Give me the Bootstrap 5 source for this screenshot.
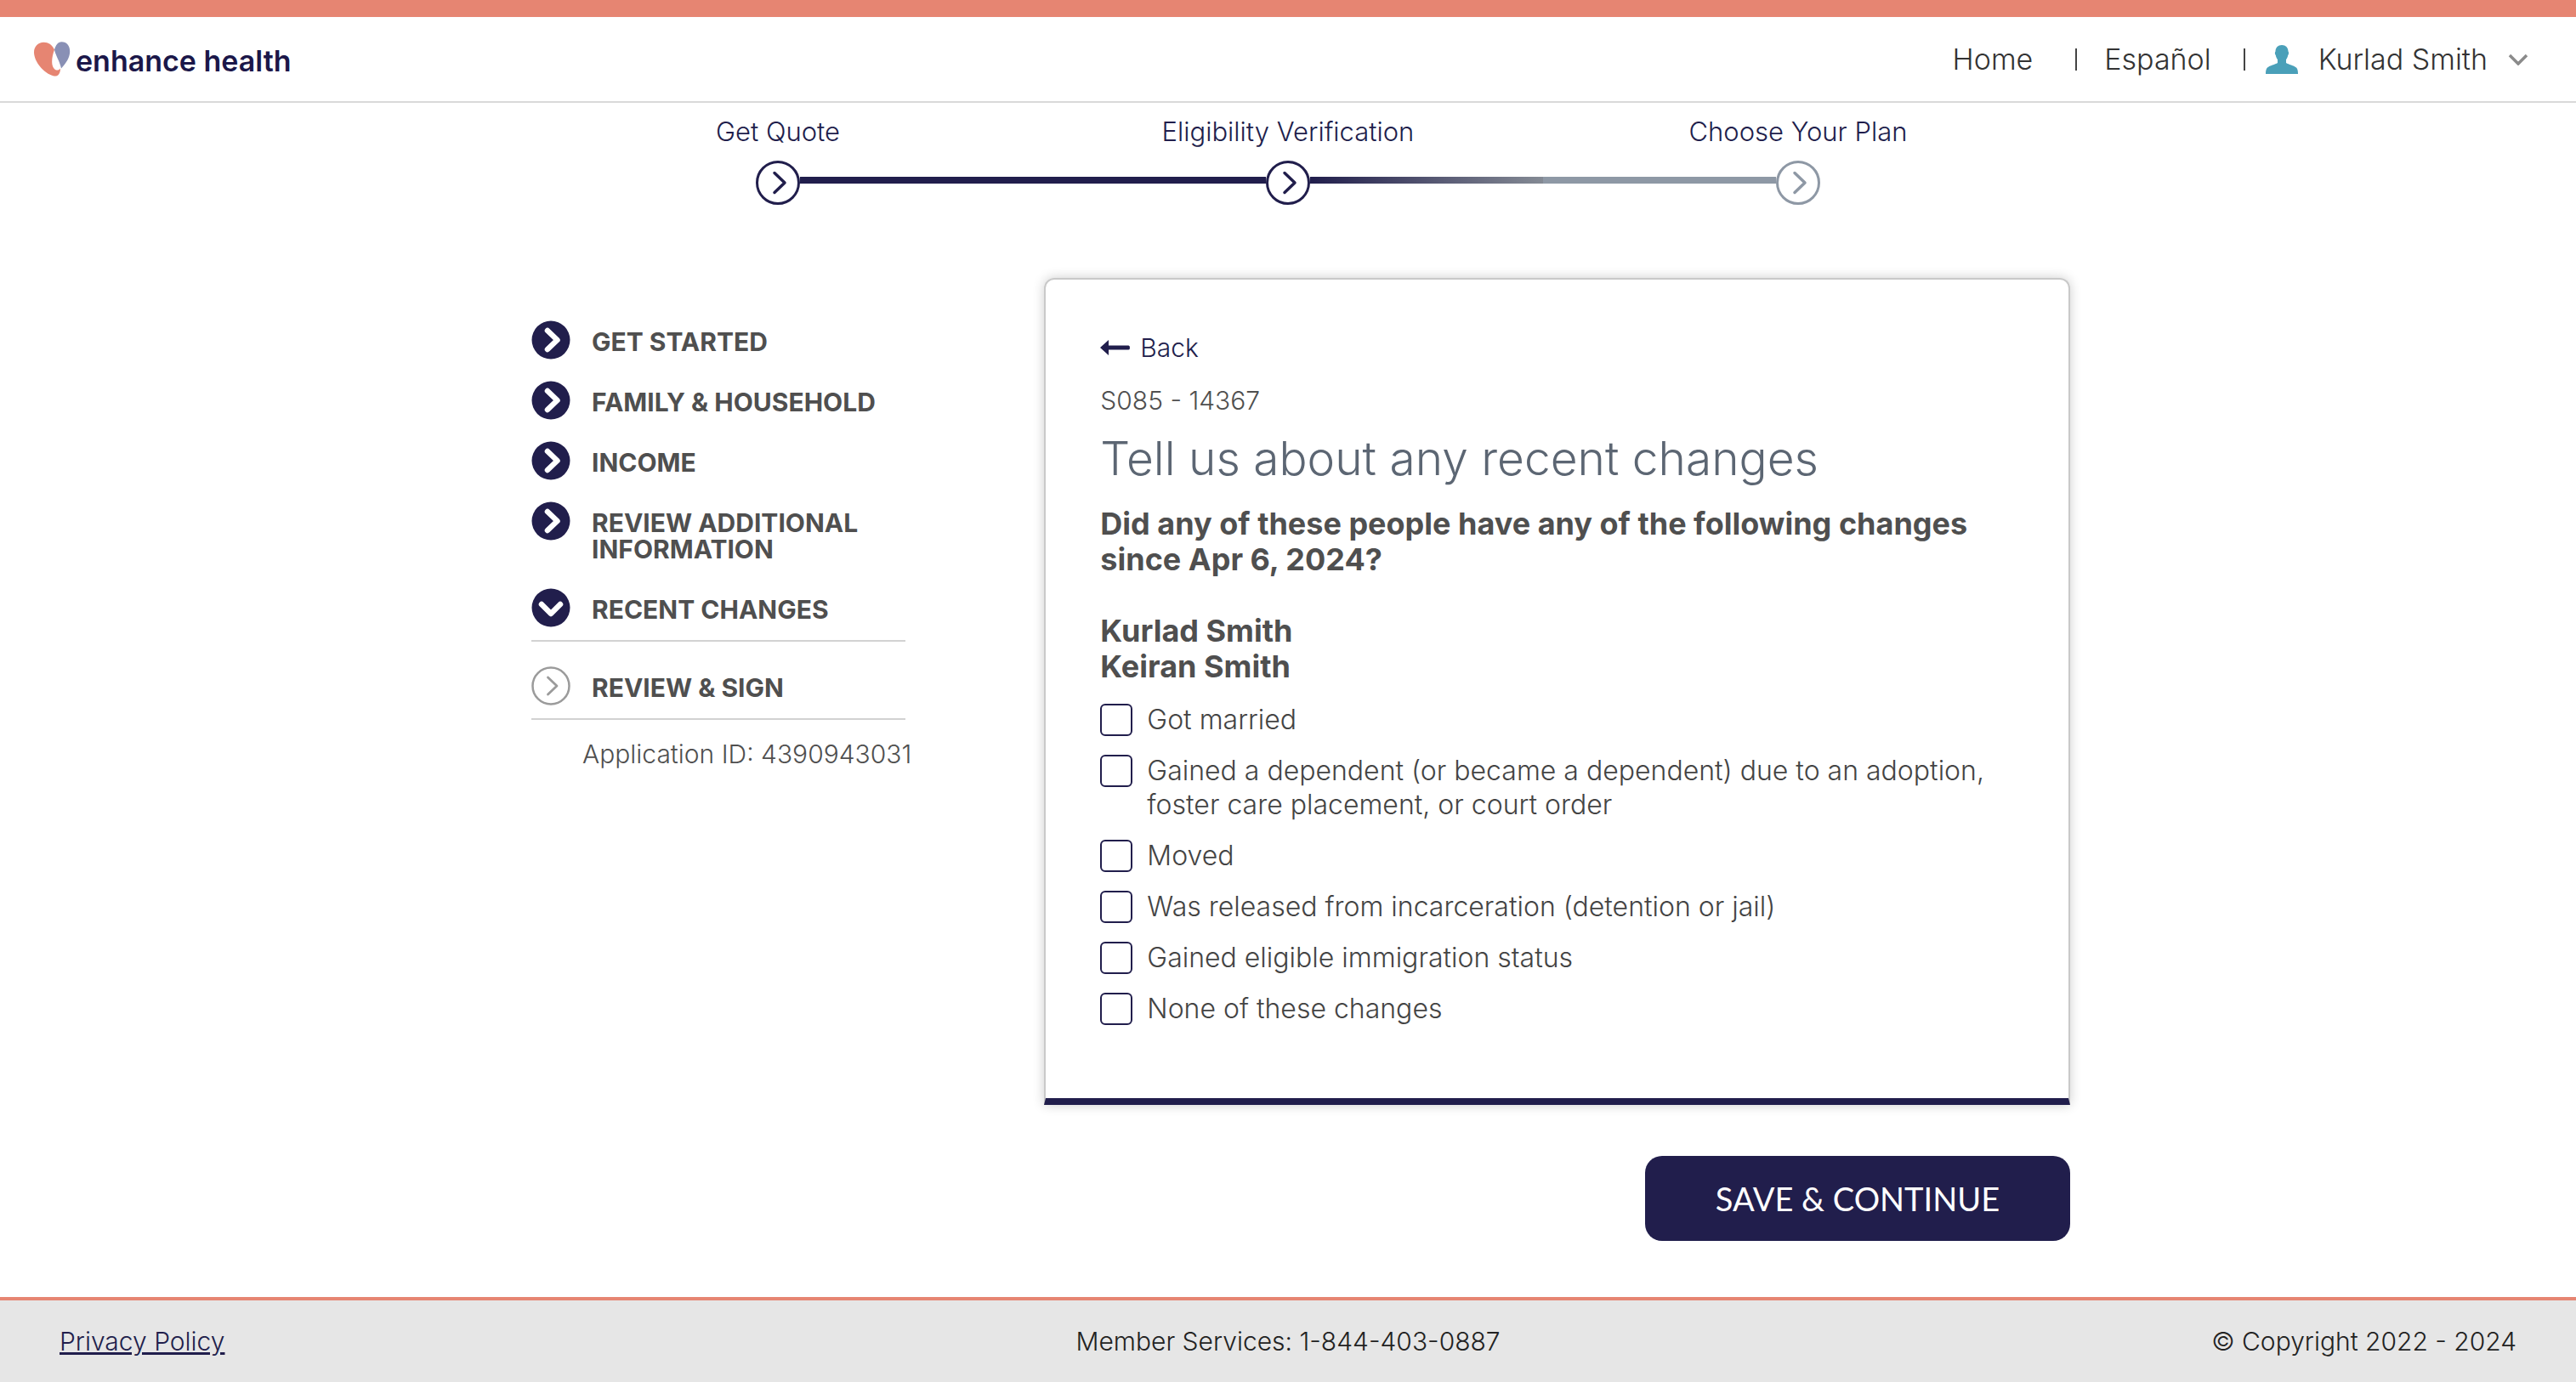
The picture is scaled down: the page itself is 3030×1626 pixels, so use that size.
<!DOCTYPE html>
<html lang="en">
<head>
<meta charset="utf-8">
<meta name="viewport" content="width=device-width, initial-scale=1">
<title>Enhance Health - Recent changes</title>
<link href="https://cdn.jsdelivr.net/npm/bootstrap@5.3.0/dist/css/bootstrap.min.css" rel="stylesheet">
<style>
:root { --navy: #211e4c; --coral: #e68572; --slate: #8e98a5; --ink: #4f4f4f; }
body { font-family: Inter, "Open Sans", sans-serif; font-size: 30px; line-height: 40px; font-weight: 300; color: var(--ink); background: #fff; }
a { color: var(--navy); }
.topbar { border-top: 20px solid var(--coral); border-bottom: 2px solid #d9d9d9; padding: 0 56px 0 40px; height: 121px; }
.brand { gap: 6px; color: #1b1749; font-size: 34px; font-weight: 600; }
.brand-name { padding-top: 4px; }
.topnav { color: #333; font-weight: 300; }
.topnav a, .topnav button { color: #333; font-size: 34px; }
.sep { width: 2px; height: 26px; background: #444; margin: 0 24px 0 38px; }
.sep-wide { margin: 0 32px 0 50px; }
.user-btn { gap: 24px; font-weight: 300; line-height: 40px; }
.stepper { max-width: 1800px; color: var(--navy); }
.step-name { margin: 14px 0; color: var(--navy); font-size: 31px; }
.track { height: 8px; margin-bottom: 6px; }
.track-done { background: var(--navy); }
.track-fade { background: linear-gradient(90deg, var(--navy), #848a94); }
.track-todo { background: var(--slate); }
.page-wrap { max-width: 1840px; padding-top: 86px; }
.side { padding-left: 30px; padding-top: 50px; }
.side-list { width: 440px; }
.side-item { gap: 25px; color: var(--ink); font-weight: 700; font-size: 30px; line-height: 31px; padding-bottom: 25px; }
.side-item span { padding: 10px 0 5px; }
.side-ruled { border-bottom: 2px solid #d2d2d2; padding-bottom: 15px; }
.side-ruled + .side-ruled { padding-top: 29px; }
.app-id { padding: 20px 0 0 60px; }
.form-col { padding-left: 20px; }
.panel { border: 2px solid #c9c9c9; border-bottom: 8px solid var(--navy); border-radius: 12px 12px 0 0; box-shadow: 0 0 14px rgba(0,0,0,.2); padding: 60px 64px 85px; }
.back { gap: 12px; }
.screen-code { margin-top: 22px; }
.panel-title { font-size: 55px; line-height: 60px; font-weight: 300; color: #5c6673; margin: 18px 0 26px; }
.question { font-size: 36px; line-height: 42px; font-weight: 700; margin-bottom: 42px; }
.people { font-size: 36px; line-height: 42px; font-weight: 700; margin-bottom: 22px; }
.choice { gap: 17px; color: #444; font-size: 32px; }
.choice + .choice { margin-top: 20px; }
.choice .form-check-input { width: 38px; height: 38px; margin: 1px 0; border: 2px solid var(--navy); border-radius: 6px; }
.btn-save { width: 500px; height: 100px; border-radius: 20px; background: var(--navy); color: #fff; font: 400 38px Lato, sans-serif; margin-top: 60px; }
.btn-save:hover { background: #35316e; color: #fff; }
.foot { border-top: 4px solid var(--coral); background: #e6e6e6; color: #222; height: 100px; padding: 0 70px; }
</style>
<script src="https://cdn.jsdelivr.net/npm/bootstrap@5.3.0/dist/js/bootstrap.bundle.min.js" defer></script>
</head>
<body class="d-flex flex-column min-vh-100">
<svg class="d-none" aria-hidden="true">
  <symbol id="ring" viewBox="0 0 52 52"><circle cx="26" cy="26" r="24.5" fill="#fff" stroke="currentColor" stroke-width="3"/><path d="M22 14.500L34 26L22 37.500" fill="none" stroke="currentColor" stroke-width="3.500" stroke-linecap="round" stroke-linejoin="round"/></symbol>
  <symbol id="ring-thin" viewBox="0 0 46 46"><circle cx="23" cy="23" r="21.500" fill="#fff" stroke="currentColor" stroke-width="2.500"/><path d="M19.500 13L30 23L19.500 33" fill="none" stroke="currentColor" stroke-width="2.800" stroke-linecap="round" stroke-linejoin="round"/></symbol>
  <symbol id="disc" viewBox="0 0 46 46"><circle cx="23" cy="23" r="22.500" fill="#211e4c"/><path d="M19 12L30.500 23L19 34" fill="none" stroke="#fff" stroke-width="6.500" stroke-linecap="round" stroke-linejoin="round"/></symbol>
  <symbol id="disc-down" viewBox="0 0 46 46"><circle cx="23" cy="23" r="22.500" fill="#211e4c"/><path d="M12 19L23 30L34 19" fill="none" stroke="#fff" stroke-width="6.500" stroke-linecap="round" stroke-linejoin="round"/></symbol>
</svg>

<header class="topbar d-flex align-items-center justify-content-between">
  <a href="#" class="brand d-flex align-items-center text-decoration-none">
    <svg width="43" height="41" viewBox="0 0 43 41" aria-hidden="true">
      <path fill="#e68572" d="M24 9.500C21 3.500 17 .8 11.500 .8C4.500 1 0 6 0 12.500C0 23 11 37.500 23.500 40.500C28.500 41.200 31 37.500 31 31.500C29.500 33.500 27.500 34 25.500 33.200C19.500 30 20.500 19 24 9.500Z"/>
      <path fill="#8990b5" d="M24 9.500C25.500 4.500 28 .3 32.500 .3C38.500 .3 42.500 5 42.200 12C42 19 37.500 25.500 32 31.500C30.500 23.500 25.500 16.500 24 9.500Z"/>
    </svg>
    <span class="brand-name">enhance health</span>
  </a>
  <nav class="topnav d-flex align-items-center">
    <a href="#" class="text-decoration-none">Home</a>
    <span class="sep sep-wide"></span>
    <a href="#" class="text-decoration-none">Español</a>
    <span class="sep"></span>
    <button type="button" class="user-btn btn p-0 border-0 d-flex align-items-center">
      <svg width="38" height="34" viewBox="0 0 38 34" aria-hidden="true"><path fill="#4aa0b9" d="M19 0C23.500 0 26.500 3 26.500 7.500C27.500 8.500 27.200 11 26.200 12C25.800 14.500 24.800 16 24 17V21C27 23 33 24 36 26.500C37.500 28 38 30.500 38 34H0C0 30.500 .5 28 2 26.500C5 24 11 23 14 21V17C13.200 16 12.200 14.500 11.800 12C10.800 11 10.500 8.500 11.500 7.500C11.500 3 14.500 0 19 0Z"/></svg>
      <span>Kurlad Smith</span>
      <svg width="24" height="14" viewBox="0 0 24 14" aria-hidden="true"><path d="M2 2L12 12L22 2" fill="none" stroke="#8b8b8b" stroke-width="3.500"/></svg>
    </button>
  </nav>
</header>

<section class="stepper row g-0 w-100 mx-auto text-center" aria-label="Progress">
  <div class="col-4">
    <div class="step-name">Get Quote</div>
    <div class="d-flex align-items-center"><span class="track flex-fill"></span><svg width="52" height="52"><use href="#ring"/></svg><span class="track track-done flex-fill"></span></div>
  </div>
  <div class="col-4">
    <div class="step-name">Eligibility Verification</div>
    <div class="d-flex align-items-center"><span class="track track-done flex-fill"></span><svg width="52" height="52"><use href="#ring"/></svg><span class="track track-fade flex-fill"></span></div>
  </div>
  <div class="col-4">
    <div class="step-name">Choose Your Plan</div>
    <div class="d-flex align-items-center"><span class="track track-todo flex-fill"></span><svg width="52" height="52" color="#8e98a5"><use href="#ring"/></svg><span class="track flex-fill"></span></div>
  </div>
</section>

<main class="page-wrap w-100 mx-auto row g-0">
  <aside class="side col-4">
    <nav class="side-list">
      <a href="#" class="side-item d-flex align-items-start text-decoration-none"><svg class="flex-shrink-0" width="46" height="46"><use href="#disc"/></svg><span>GET STARTED</span></a>
      <a href="#" class="side-item d-flex align-items-start text-decoration-none"><svg class="flex-shrink-0" width="46" height="46"><use href="#disc"/></svg><span>FAMILY &amp; HOUSEHOLD</span></a>
      <a href="#" class="side-item d-flex align-items-start text-decoration-none"><svg class="flex-shrink-0" width="46" height="46"><use href="#disc"/></svg><span>INCOME</span></a>
      <a href="#" class="side-item d-flex align-items-start text-decoration-none"><svg class="flex-shrink-0" width="46" height="46"><use href="#disc"/></svg><span>REVIEW ADDITIONAL INFORMATION</span></a>
      <a href="#" class="side-item side-ruled d-flex align-items-start text-decoration-none"><svg class="flex-shrink-0" width="46" height="46"><use href="#disc-down"/></svg><span>RECENT CHANGES</span></a>
      <a href="#" class="side-item side-ruled d-flex align-items-start text-decoration-none"><svg class="flex-shrink-0" width="46" height="46" color="#9b9b9b"><use href="#ring-thin"/></svg><span>REVIEW &amp; SIGN</span></a>
    </nav>
    <div class="app-id">Application ID: 4390943031</div>
  </aside>

  <form class="form-col col-8">
    <div class="panel">
      <a href="#" class="back d-flex align-items-center text-decoration-none">
        <svg width="35" height="18" viewBox="0 0 35 18" aria-hidden="true"><path fill="#211e4c" d="M0 9L10 0V6.500H33.500Q35 6.500 35 9T33.500 11.500H10V18Z"/></svg>
        <span>Back</span>
      </a>
      <div class="screen-code">S085 - 14367</div>
      <h1 class="panel-title">Tell us about any recent changes</h1>
      <p class="question">Did any of these people have any of the following changes since Apr 6, 2024?</p>
      <div class="people">Kurlad Smith<br>Keiran Smith</div>
      <div class="choice d-flex align-items-start"><input class="form-check-input flex-shrink-0" type="checkbox" id="c1"><label for="c1">Got married</label></div>
      <div class="choice d-flex align-items-start"><input class="form-check-input flex-shrink-0" type="checkbox" id="c2"><label for="c2">Gained a dependent (or became a dependent) due to an adoption, foster care placement, or court order</label></div>
      <div class="choice d-flex align-items-start"><input class="form-check-input flex-shrink-0" type="checkbox" id="c3"><label for="c3">Moved</label></div>
      <div class="choice d-flex align-items-start"><input class="form-check-input flex-shrink-0" type="checkbox" id="c4"><label for="c4">Was released from incarceration (detention or jail)</label></div>
      <div class="choice d-flex align-items-start"><input class="form-check-input flex-shrink-0" type="checkbox" id="c5"><label for="c5">Gained eligible immigration status</label></div>
      <div class="choice d-flex align-items-start"><input class="form-check-input flex-shrink-0" type="checkbox" id="c6"><label for="c6">None of these changes</label></div>
    </div>
    <div class="text-end"><button type="submit" class="btn btn-save">SAVE &amp; CONTINUE</button></div>
  </form>
</main>

<footer class="foot mt-auto d-flex align-items-center">
  <a href="#" class="col">Privacy Policy</a>
  <div>Member Services: 1-844-403-0887</div>
  <div class="col text-end">© Copyright 2022 - 2024</div>
</footer>
</body>
</html>
